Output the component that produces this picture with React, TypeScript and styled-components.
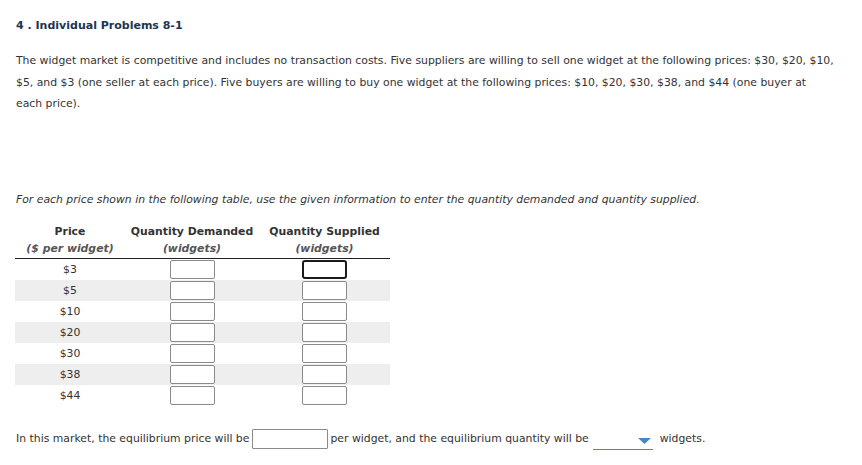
import React, { FC } from 'react'
import styled, { createGlobalStyle } from 'styled-components'

const GlobalStyle = createGlobalStyle`
  body {
    margin: 0;
    background: #fff;
    font-family: "DejaVu Sans", Verdana, sans-serif;
    font-size: 10.85px;
    color: #333;
  }
`

const Page = styled.div`
  padding: 18px 16px 0 16px;
  width: 862px;
  box-sizing: border-box;
`

const Title = styled.h2`
  margin: 0;
  font-size: 11px;
  font-weight: bold;
  color: #1b3553;
  line-height: 16px;
`

const Paragraph = styled.p`
  margin: 16px 0 0;
  line-height: 21.5px;
`

const NoWrap = styled.span`
  white-space: nowrap;
`

const Instruction = styled.p`
  margin: 76px 0 0;
  font-style: italic;
  line-height: 18px;
`

const Table = styled.table`
  margin: 14px 0 0 -1px;
  border-collapse: collapse;
`

const HeadCell = styled.th<{ $w: number }>`
  width: ${p => p.$w}px;
  padding: 0 0 1px;
  font-weight: bold;
  line-height: 17px;
  text-align: center;
  border-bottom: 1px solid #222;
`

const Unit = styled.span`
  display: block;
  font-style: italic;
  color: #555;
`

const Row = styled.tr<{ $shade: boolean }>`
  background: ${p => (p.$shade ? '#eeeeef' : '#fff')};
  height: 21px;
`

const Cell = styled.td`
  padding: 0;
  text-align: center;
`

const Box = styled.input<{ $focus?: boolean }>`
  box-sizing: border-box;
  width: 45px;
  height: 19px;
  margin: 1px 0;
  padding: 0 2px;
  border: ${p => (p.$focus ? '2px solid #1a1a1a' : '1px solid #8a8a8a')};
  border-radius: ${p => (p.$focus ? '3px' : '2px')};
  background: #fff;
  vertical-align: middle;
  outline: none;
`

const Sentence = styled.p`
  margin: 23px 0 0;
  display: flex;
  align-items: center;
  line-height: 20px;
`

const PriceBox = styled.input`
  box-sizing: border-box;
  width: 76px;
  height: 20px;
  margin: 0 2px 0 3px;
  border: 1px solid #8a8a8a;
  border-radius: 1px;
  background: #fff;
  outline: none;
`

const Dropdown = styled.span`
  display: inline-flex;
  justify-content: flex-end;
  align-items: center;
  box-sizing: border-box;
  width: 60px;
  height: 17px;
  margin: 4px 7px 0 4px;
  padding-right: 2px;
  border-bottom: 1px solid #4a86c5;
`

const prices = ['$3', '$5', '$10', '$20', '$30', '$38', '$44']

const App: FC = () => {
  return (
    <Page>
      <GlobalStyle />
      <Title>4 . Individual Problems 8-1</Title>
      <Paragraph>
        The widget market is competitive and includes no transaction costs. Five suppliers are willing to sell one
        widget at the following prices: $30, $20, $10, $5, and $3 (one seller at each price). Five buyers are willing
        to buy one widget at the following prices: $10, $20, $30, $38, and $44 (one buyer at{' '}
        <NoWrap>each price).</NoWrap>
      </Paragraph>
      <Instruction>
        For each price shown in the following table, use the given information to enter the quantity demanded and
        quantity supplied.
      </Instruction>
      <Table>
        <thead>
          <tr>
            <HeadCell $w={110}>
              Price<Unit>($ per widget)</Unit>
            </HeadCell>
            <HeadCell $w={134}>
              Quantity Demanded<Unit>(widgets)</Unit>
            </HeadCell>
            <HeadCell $w={131}>
              Quantity Supplied<Unit>(widgets)</Unit>
            </HeadCell>
          </tr>
        </thead>
        <tbody>
          {prices.map((price, index) => (
            <Row key={price} $shade={index % 2 === 1}>
              <Cell>{price}</Cell>
              <Cell>
                <Box type="text" />
              </Cell>
              <Cell>
                <Box type="text" $focus={index === 0} />
              </Cell>
            </Row>
          ))}
        </tbody>
      </Table>
      <Sentence>
        In this market, the equilibrium price will be
        <PriceBox type="text" />
        per widget, and the equilibrium quantity will be
        <Dropdown>
          <svg width="13" height="6" viewBox="0 0 13 6">
            <path d="M0 0 H13 L6.5 6 Z" fill="#4a86c5" />
          </svg>
        </Dropdown>
        widgets.
      </Sentence>
    </Page>
  )
}

export default App
